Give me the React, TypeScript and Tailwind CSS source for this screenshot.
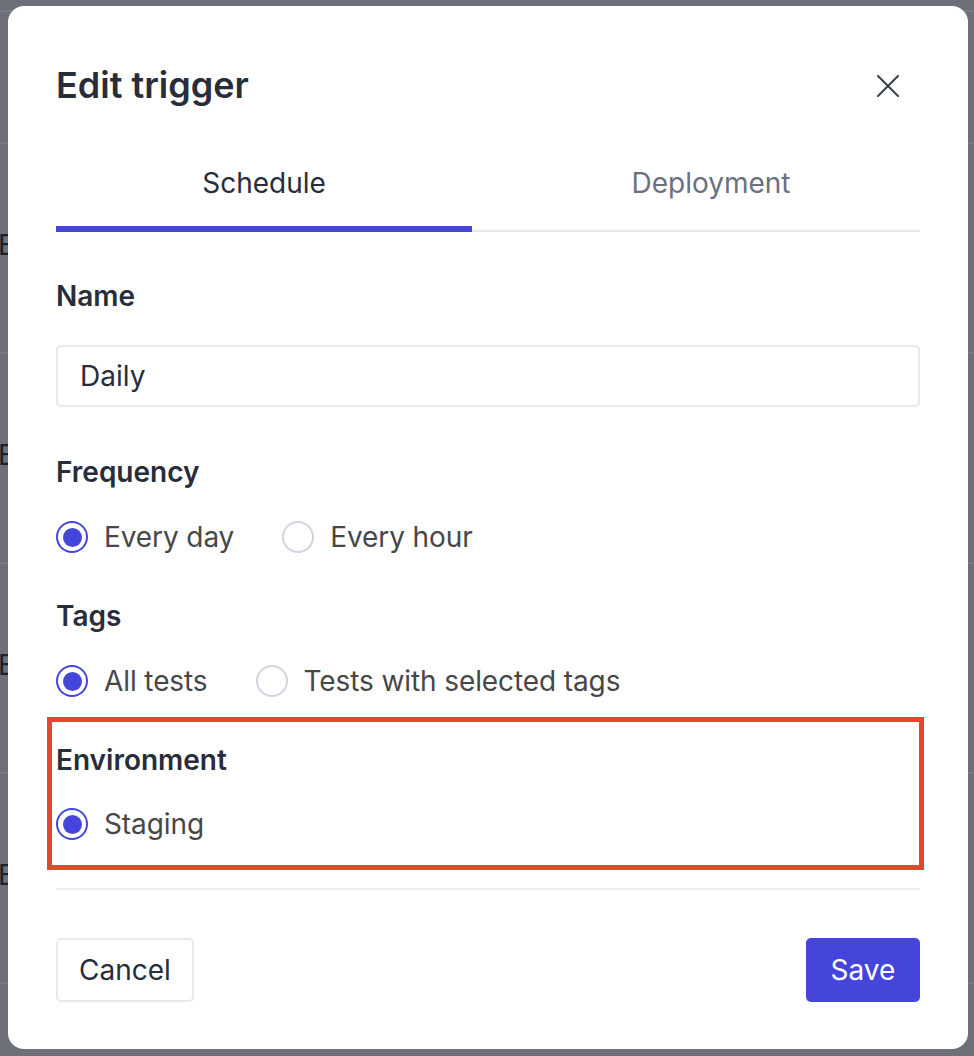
import React, { useState } from 'react';

const font = { fontFamily: 'Inter, "Liberation Sans", sans-serif' };

function Radio({ label, checked, onClick }: { label: string; checked: boolean; onClick: () => void }) {
  return (
    <button type="button" onClick={onClick} className="flex items-center gap-[16px] h-[42px]">
      {checked ? (
        <span className="w-[32px] h-[32px] rounded-full border-[2.5px] border-[#4545dc] flex items-center justify-center">
          <span className="w-[19px] h-[19px] rounded-full bg-[#4545dc]" />
        </span>
      ) : (
        <span className="w-[32px] h-[32px] rounded-full border-2 border-[#cfd4e0]" />
      )}
      <span className="text-[28px] leading-[42px] text-[#474747] tracking-[-0.1px]">{label}</span>
    </button>
  );
}

export default function App() {
  const [tab, setTab] = useState<'schedule' | 'deployment'>('schedule');
  const [freq, setFreq] = useState('day');
  const [tags, setTags] = useState('all');

  return (
    <div className="relative w-[974px] h-[1056px] bg-[#6d7079] overflow-hidden" style={font}>
      {/* Page behind the overlay */}
      <div className="pt-[10px]">
        <div className="h-[132px] border-t-2 border-[#777a82]" />
        {[0, 1, 2, 3, 4].map((i) => (
          <div key={i} className="h-[210px] border-t-2 border-[#777a82] flex items-center">
            <span className="text-[28px] leading-none text-[#1d2029] -ml-[2px] -mt-[6px]">E</span>
          </div>
        ))}
      </div>

      {/* Modal */}
      <div className="absolute left-[8px] top-[6px] w-[960px] h-[1043px] bg-white rounded-[16px] px-[48px] pt-[58px] flex flex-col">
        <div className="flex items-center justify-between h-[42px]">
          <h2 className="text-[36px] leading-[42px] font-semibold text-[#282d3a]">Edit trigger</h2>
          <button type="button" className="w-[32px] h-[32px] flex items-center justify-center mr-[16px] mt-[2px]">
            <svg width="22" height="22" viewBox="0 0 22 22" fill="none" stroke="#3a3f4c" strokeWidth="2" strokeLinecap="round">
              <path d="M1 1 L21 21 M21 1 L1 21" />
            </svg>
          </button>
        </div>

        {/* Tabs */}
        <div className="mt-[56px] flex items-end">
          <button
            type="button"
            onClick={() => setTab('schedule')}
            className={
              tab === 'schedule'
                ? 'w-[416px] pb-[22px] border-b-[6px] border-[#4545dc] text-[28px] leading-[42px] text-[#282d3a]'
                : 'w-[416px] pb-[26px] border-b-2 border-[#e8e8ef] text-[28px] leading-[42px] text-[#6b7080]'
            }
          >
            Schedule
          </button>
          <button
            type="button"
            onClick={() => setTab('deployment')}
            className={
              tab === 'deployment'
                ? 'flex-1 pl-[30px] pb-[22px] border-b-[6px] border-[#4545dc] text-[28px] leading-[42px] text-[#282d3a]'
                : 'flex-1 pl-[30px] pb-[26px] border-b-2 border-[#e8e8ef] text-[28px] leading-[42px] text-[#6b7080]'
            }
          >
            Deployment
          </button>
        </div>

        {/* Name */}
        <div className="mt-[43px] text-[28px] leading-[42px] font-semibold text-[#282d3a]">Name</div>
        <div className="mt-[28px] h-[62px] border-2 border-[#e8e8ef] rounded-[5px] px-[22px] flex items-center text-[28px] text-[#282d3a]">
          Daily
        </div>

        {/* Frequency */}
        <div className="mt-[44px] text-[28px] leading-[42px] font-semibold text-[#282d3a]">Frequency</div>
        <div className="mt-[23px] flex items-center gap-[48px]">
          <Radio label="Every day" checked={freq === 'day'} onClick={() => setFreq('day')} />
          <Radio label="Every hour" checked={freq === 'hour'} onClick={() => setFreq('hour')} />
        </div>

        {/* Tags */}
        <div className="mt-[37px] text-[28px] leading-[42px] font-semibold text-[#282d3a]">Tags</div>
        <div className="mt-[23px] flex items-center gap-[48px]">
          <Radio label="All tests" checked={tags === 'all'} onClick={() => setTags('all')} />
          <Radio label="Tests with selected tags" checked={tags === 'selected'} onClick={() => setTags('selected')} />
        </div>

        {/* Environment (highlighted) */}
        <div className="relative mt-[37px]">
          <div className="absolute -left-[9px] -right-[4px] -top-[22px] -bottom-[25px] border-[5px] border-[#e8462c] pointer-events-none" />
          <div className="text-[28px] leading-[42px] font-semibold text-[#282d3a]">Environment</div>
          <div className="mt-[22px] flex items-center">
            <Radio label="Staging" checked onClick={() => {}} />
          </div>
        </div>

        <div className="mt-[43px] h-[2px] bg-[#ebebf0]" />

        <div className="mt-[48px] flex items-center justify-between">
          <button type="button" className="w-[138px] h-[64px] border-2 border-[#e8e8ef] rounded-[5px] text-[28px] text-[#282d3a]">
            Cancel
          </button>
          <button type="button" className="w-[114px] h-[64px] rounded-[5px] bg-[#4545dc] text-[28px] text-white">
            Save
          </button>
        </div>
      </div>
    </div>
  );
}
